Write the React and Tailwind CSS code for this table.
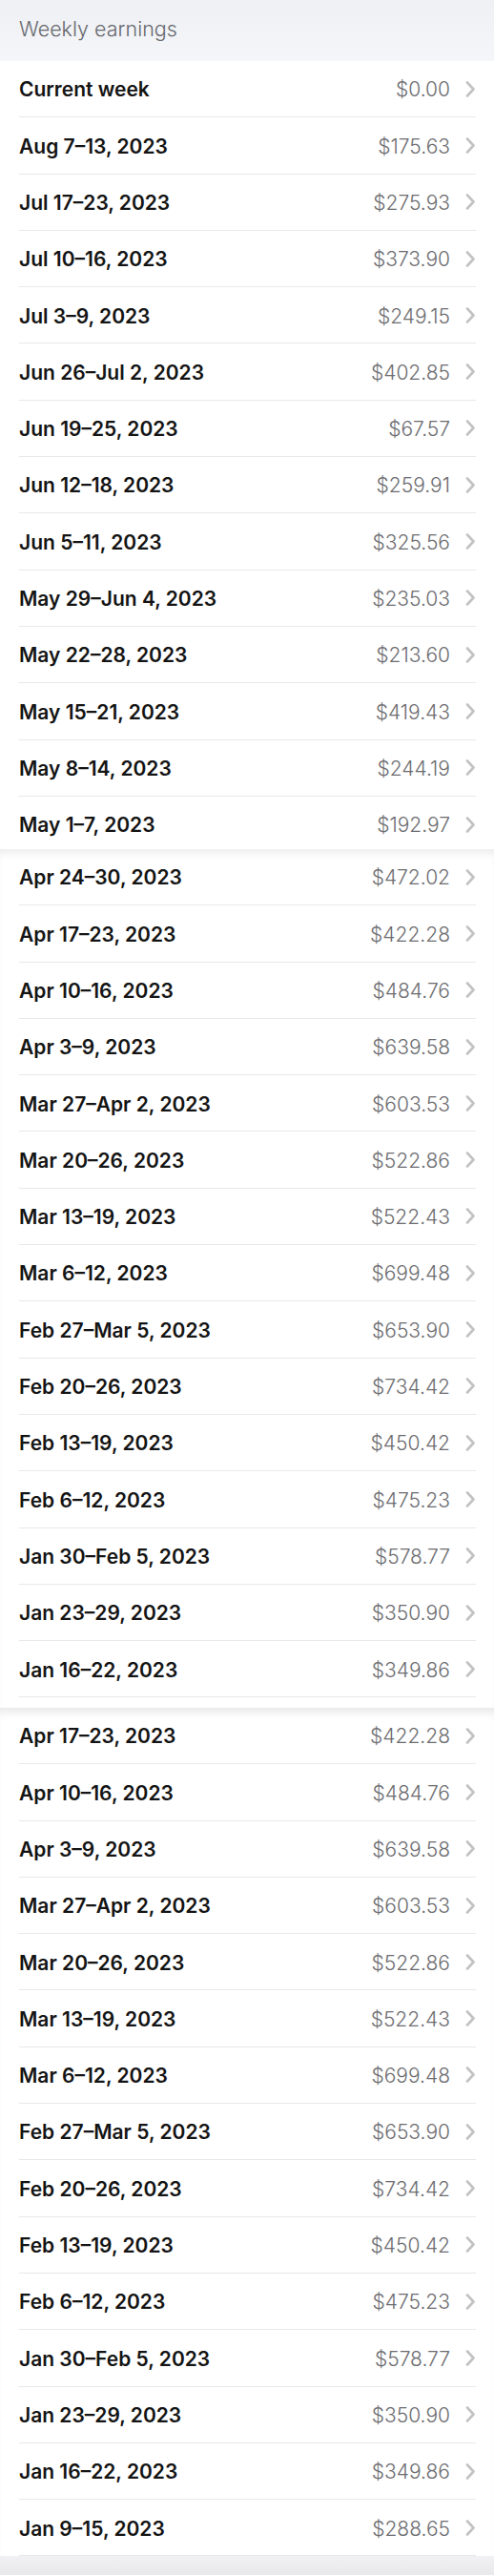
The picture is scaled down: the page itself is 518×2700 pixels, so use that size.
import React from "react";

const s1 = [
  ["Current week", "$0.00"],
  ["Aug 7–13, 2023", "$175.63"],
  ["Jul 17–23, 2023", "$275.93"],
  ["Jul 10–16, 2023", "$373.90"],
  ["Jul 3–9, 2023", "$249.15"],
  ["Jun 26–Jul 2, 2023", "$402.85"],
  ["Jun 19–25, 2023", "$67.57"],
  ["Jun 12–18, 2023", "$259.91"],
  ["Jun 5–11, 2023", "$325.56"],
  ["May 29–Jun 4, 2023", "$235.03"],
  ["May 22–28, 2023", "$213.60"],
  ["May 15–21, 2023", "$419.43"],
  ["May 8–14, 2023", "$244.19"],
  ["May 1–7, 2023", "$192.97"],
];

const mid = [
  ["Apr 17–23, 2023", "$422.28"],
  ["Apr 10–16, 2023", "$484.76"],
  ["Apr 3–9, 2023", "$639.58"],
  ["Mar 27–Apr 2, 2023", "$603.53"],
  ["Mar 20–26, 2023", "$522.86"],
  ["Mar 13–19, 2023", "$522.43"],
  ["Mar 6–12, 2023", "$699.48"],
  ["Feb 27–Mar 5, 2023", "$653.90"],
  ["Feb 20–26, 2023", "$734.42"],
  ["Feb 13–19, 2023", "$450.42"],
  ["Feb 6–12, 2023", "$475.23"],
  ["Jan 30–Feb 5, 2023", "$578.77"],
  ["Jan 23–29, 2023", "$350.90"],
  ["Jan 16–22, 2023", "$349.86"],
];

const s2 = [["Apr 24–30, 2023", "$472.02"], ...mid];
const s3 = [...mid, ["Jan 9–15, 2023", "$288.65"]];

function Chevron() {
  return (
    <svg width="12" height="17" viewBox="0 0 12 17" fill="none" className="ml-[15px] shrink-0">
      <path d="M3 1.5 L9.5 8.5 L3 15.5" stroke="#c2c2c4" strokeWidth="2.6" strokeLinecap="round" strokeLinejoin="round" />
    </svg>
  );
}

function Row({ label, amount }) {
  return (
    <div className="h-[59.3px] ml-5 mr-[19px] flex items-center border-b border-[#e8e8ea]">
      <span className="flex-1 text-[21px] font-semibold text-[#141414] pt-[2px]">{label}</span>
      <span className="text-[21px] font-light text-[#6c6c70] pt-[2px]">{amount}</span>
      <Chevron />
    </div>
  );
}

export default function App() {
  return (
    <div className="w-[518px] bg-white" style={{ fontFamily: "Inter, 'Liberation Sans', sans-serif" }}>
      <div className="h-16 bg-gradient-to-b from-[#eef0f3] to-[#f5f6f9] flex items-center px-5 pb-[3px]">
        <span className="text-[21.5px] font-light text-[#66686e]">Weekly earnings</span>
      </div>
      <div className="h-[826px] overflow-hidden bg-white">
        {s1.map(([l, a]) => (
          <Row key={l} label={l} amount={a} />
        ))}
      </div>
      <div className="h-[900px] overflow-hidden bg-white shadow-[inset_0_8px_8px_-4px_rgba(0,0,0,0.08)]">
        {s2.map(([l, a]) => (
          <Row key={l} label={l} amount={a} />
        ))}
      </div>
      <div className="bg-white shadow-[inset_0_10px_10px_-5px_rgba(0,0,0,0.09)]">
        {s3.map(([l, a]) => (
          <Row key={l} label={l} amount={a} />
        ))}
      </div>
      <div className="h-5 bg-gradient-to-b from-[#f1f1f3] to-[#e9e9ec]" />
    </div>
  );
}
